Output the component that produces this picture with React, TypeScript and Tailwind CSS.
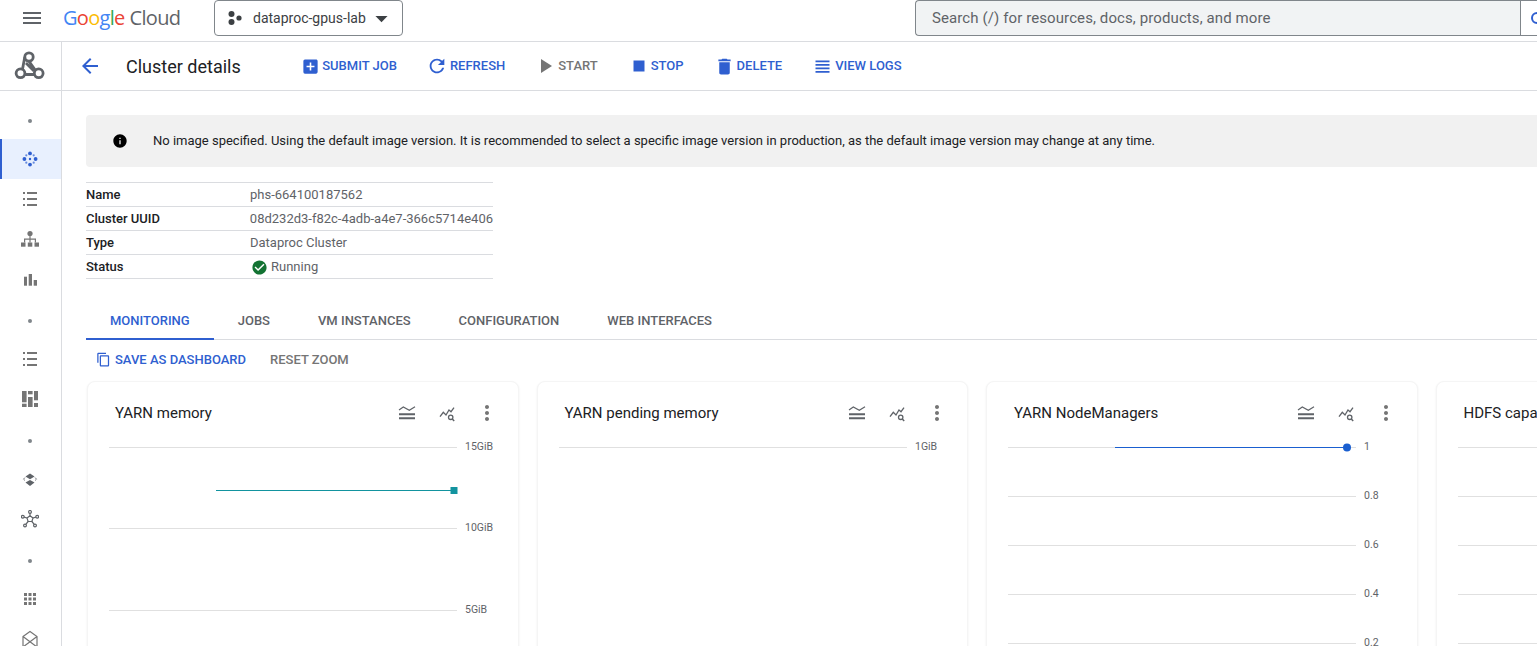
import React from "react";
import {
  MdAddBox,
  MdArrowBack,
  MdArrowDropDown,
  MdCheckCircle,
  MdContentCopy,
  MdDelete,
  MdInfo,
  MdMenu,
  MdMoreVert,
  MdPlayArrow,
  MdRefresh,
  MdStop,
  MdViewHeadline,
} from "react-icons/md";

const GREY = "#757575";
const DARK = "#5f6368";

const Dot = () => (
  <svg width="20" height="20" viewBox="0 0 20 20" className="mt-[3px]">
    <circle cx="10" cy="10" r="2" fill="#80868b" />
  </svg>
);

const ClusterDots = () => (
  <svg width="16" height="16" viewBox="0 0 16 16" fill="#2f5fd0">
    <circle cx="8" cy="2.400" r="1.900" />
    <circle cx="2.400" cy="8" r="1.900" />
    <circle cx="13.600" cy="8" r="1.900" />
    <circle cx="8" cy="13.600" r="1.900" />
    <circle cx="8" cy="8" r="1.200" />
    <circle cx="4.300" cy="4.300" r="1.100" opacity="0.7" />
    <circle cx="11.700" cy="4.300" r="1.100" opacity="0.7" />
    <circle cx="4.300" cy="11.700" r="1.100" opacity="0.7" />
    <circle cx="11.700" cy="11.700" r="1.100" opacity="0.7" />
  </svg>
);

const ListIcon = () => (
  <svg width="16" height="16" viewBox="0 0 16 16" fill={GREY}>
    <rect x="1" y="1" width="2" height="2" />
    <rect x="5" y="1" width="10" height="2" />
    <rect x="1" y="7" width="2" height="2" />
    <rect x="5" y="7" width="10" height="2" />
    <rect x="1" y="13" width="2" height="2" />
    <rect x="5" y="13" width="10" height="2" />
  </svg>
);

const TreeIcon = () => (
  <svg width="18" height="18" viewBox="0 0 18 18" fill={GREY}>
    <circle cx="9" cy="3.500" r="2.600" />
    <path d="M8.400 5h1.200v3.500h5.400v4h-1.200V9.700H9.600v2.800H8.400V9.700H4.200v2.800H3v-4h5.400z" />
    <rect x="0" y="12.500" width="4.500" height="4.200" />
    <rect x="6.800" y="12.500" width="4.500" height="4.200" />
    <rect x="13.500" y="12.500" width="4.500" height="4.200" />
  </svg>
);

const BarsIcon = () => (
  <svg width="16" height="16" viewBox="0 0 16 16" fill={GREY}>
    <rect x="2" y="5.700" width="3" height="9" />
    <rect x="6.700" y="3" width="3.300" height="11.700" />
    <rect x="11.700" y="9" width="3.300" height="5.700" />
  </svg>
);

const BoardIcon = () => (
  <svg width="16" height="16" viewBox="0 0 16 16" fill={GREY}>
    <rect x="0" y="0" width="4.600" height="11.300" />
    <rect x="0" y="12.700" width="4.600" height="3.300" />
    <rect x="6" y="0" width="4.600" height="3.300" />
    <rect x="6" y="6" width="4.600" height="10" />
    <rect x="12" y="0" width="4" height="9.300" />
    <rect x="12" y="12" width="4" height="4" />
  </svg>
);

const OrbitIcon = () => (
  <svg width="16" height="16" viewBox="0 0 16 16" fill={DARK}>
    <path d="M8 2.500 12.500 5.500 8 8.300 3.500 5.500z" />
    <path d="M8 9 12.500 11.500 8 15 3.500 11.500z" />
    <path d="M3 6.500 1.500 8.200 3 9.500M13 6.500l1.500 1.700L13 9.500" fill="none" stroke={DARK} strokeWidth="0.800" />
  </svg>
);

const HubIcon = () => (
  <svg width="18" height="18" viewBox="0 0 18 18" fill="none" stroke={DARK} strokeWidth="1.200">
    <path d="M9 5.800 12 8l-1.100 3.500H7.100L6 8z" />
    <circle cx="9" cy="1.900" r="1.400" />
    <circle cx="1.800" cy="6.700" r="1.400" />
    <circle cx="16.200" cy="6.700" r="1.400" />
    <circle cx="4" cy="15.500" r="1.400" />
    <circle cx="14" cy="15.500" r="1.400" />
    <path d="M9 3.300v2.500M3.100 7.100 6 8M14.900 7.100 12 8M4.800 14.300l2.300-2.800M13.200 14.300l-2.300-2.800" />
  </svg>
);

const GridIcon = () => (
  <svg width="14" height="14" viewBox="0 0 14 14" fill={GREY}>
    {[1, 5.5, 10].map((y) =>
      [1, 5.5, 10].map((x) => <rect key={`${x}-${y}`} x={x} y={y} width="3" height="3" />),
    )}
  </svg>
);

const EnvelopeIcon = () => (
  <svg width="18" height="18" viewBox="0 0 18 18" fill="none" stroke={GREY} strokeWidth="1.200">
    <path d="M2 6.500 9 1.500l7 5V17H2zM2 6.500 16 17M16 6.500 2 17" />
  </svg>
);

const ClusterLogo = () => (
  <svg width="32" height="32" viewBox="0 0 32 32" fill="none" stroke={DARK} strokeWidth="2.800">
    <circle cx="15" cy="7" r="4.200" />
    <circle cx="6.500" cy="23.300" r="4.400" />
    <circle cx="24.700" cy="23.300" r="4.400" />
    <path d="M10.800 7 8.500 19.300M10.500 24.500h10M15 11.200l6 8.700M12 13l8 8" />
  </svg>
);

const ProjectDots = () => (
  <svg width="14" height="14" viewBox="0 0 14 14" fill="#3c4043">
    <circle cx="3.500" cy="3" r="3" />
    <circle cx="11" cy="7" r="2.600" />
    <circle cx="3.500" cy="11" r="3" />
  </svg>
);

const LegendIcon = () => (
  <svg width="18" height="18" viewBox="0 0 18 18" fill="none" stroke={DARK} strokeWidth="1.200">
    <path d="M1 6 5.300 3l6 3.300L17 2.700" />
    <path d="M1 10.300h16M1 14.300h16" strokeWidth="2" />
  </svg>
);

const ExploreIcon = () => (
  <svg width="18" height="18" viewBox="0 0 18 18" fill="none" stroke={DARK} strokeWidth="1.300">
    <path d="M2 12.700 5.300 8.300 8 11l3-5 2 1.700 3-4" />
    <circle cx="12.700" cy="13.300" r="2.200" />
    <path d="m14.300 15 1.900 2" strokeWidth="1.500" />
  </svg>
);

const navItems = [
  <Dot />,
  <ClusterDots />,
  <ListIcon />,
  <TreeIcon />,
  <BarsIcon />,
  <Dot />,
  <ListIcon />,
  <BoardIcon />,
  <Dot />,
  <OrbitIcon />,
  <HubIcon />,
  <Dot />,
  <GridIcon />,
  <EnvelopeIcon />,
];

const Sidebar = () => (
  <aside className="flex w-[62px] shrink-0 flex-col border-r border-[#dadce0]">
    <div className="flex h-[49px] shrink-0 items-center justify-center border-b border-[#dadce0] pr-[2px]">
      <ClusterLogo />
    </div>
    <nav className="flex flex-col pt-[8px]">
      {navItems.map((icon, i) => (
        <div
          key={i}
          className={`flex h-[40px] shrink-0 items-center justify-center ${
            i === 1 ? "border-l-2 border-[#2f5fd0] bg-[#e8f0fe] pr-[3px]" : "pr-px"
          }`}>
          {icon}
        </div>
      ))}
    </nav>
  </aside>
);

const TopBar = () => (
  <header className="flex h-[42px] shrink-0 items-center border-b border-[#dadce0] bg-white pb-[5px]">
    <MdMenu size={24} color={DARK} className="ml-[20px] shrink-0" />
    <div className="ml-[19px] flex w-[118px] shrink-0 items-baseline font-['Open_Sans',sans-serif] text-[20px] leading-none tracking-[-0.7px]">
      <span className="text-[#4285f4]">G</span>
      <span className="text-[#ea4335]">o</span>
      <span className="text-[#fbbc04]">o</span>
      <span className="text-[#4285f4]">g</span>
      <span className="text-[#34a853]">l</span>
      <span className="text-[#ea4335]">e</span>
      <span className="ml-[5px] text-[#5f6368]">Cloud</span>
    </div>
    <button className="ml-[33px] flex h-[36px] w-[189px] shrink-0 items-center rounded border border-[#80868b] pl-[13px] text-[14px] text-[#3c4043]">
      <ProjectDots />
      <span className="ml-[11px]">dataproc-gpus-lab</span>
      <MdArrowDropDown size={29} color="#3c4043" className="ml-px" />
    </button>
    <div className="ml-auto flex h-[36px] w-[622px] shrink-0 items-center rounded-l border border-r-0 border-[#80868b] bg-[#f1f3f4]">
      <span className="flex-1 pl-[16px] text-[15px] tracking-[0.1px] text-[#5f6368]">
        Search (/) for resources, docs, products, and more
      </span>
      <div className="flex h-full w-[17px] items-center overflow-hidden border-l border-[#80868b] bg-white pl-[10px]">
        <span className="block h-[12px] w-[12px] shrink-0 rounded-full border-2 border-[#2f5fd0]" />
      </div>
    </div>
  </header>
);

const ActionButton = ({
  icon,
  label,
  disabled,
  className = "",
}: {
  icon: React.ReactNode;
  label: string;
  disabled?: boolean;
  className?: string;
}) => (
  <button
    className={`flex items-center text-[13px] font-medium ${
      disabled ? "text-[#757575]" : "text-[#2f5fd0]"
    } ${className}`}>
    {icon}
    {label}
  </button>
);

const SubHeader = () => (
  <div className="flex h-[49px] shrink-0 items-center border-b border-[#dadce0] pl-[16px]">
    <MdArrowBack size={24} color="#2f5fd0" />
    <h1 className="ml-[24px] text-[18px] text-[#202124]">Cluster details</h1>
    <ActionButton
      className="ml-[60px]"
      label="SUBMIT JOB"
      icon={<MdAddBox size={19} className="mr-[2.500px]" />}
    />
    <ActionButton
      className="ml-[29px]"
      label="REFRESH"
      icon={<MdRefresh size={22} className="mr-[2px]" />}
    />
    <ActionButton
      disabled
      className="ml-[28px]"
      label="START"
      icon={<MdPlayArrow size={24} className="mr-[1px]" />}
    />
    <ActionButton
      className="ml-[30px]"
      label="STOP"
      icon={<MdStop size={22} className="mr-[1px]" />}
    />
    <ActionButton
      className="ml-[30px]"
      label="DELETE"
      icon={<MdDelete size={21} className="mr-[2px]" />}
    />
    <ActionButton
      className="ml-[29.500px]"
      label="VIEW LOGS"
      icon={<MdViewHeadline size={21} className="mr-[2.500px]" />}
    />
  </div>
);

const details = [
  ["Name", "phs-664100187562"],
  ["Cluster UUID", "08d232d3-f82c-4adb-a4e7-366c5714e406"],
  ["Type", "Dataproc Cluster"],
];

const DetailsTable = () => (
  <div className="mt-[15px] w-[407px] border-t border-[#dadce0] text-[13px]">
    {details.map(([k, v]) => (
      <div key={k} className="flex h-[24px] items-center border-b border-[#dadce0] pt-px">
        <span className="w-[164px] font-medium text-[#202124]">{k}</span>
        <span className="whitespace-nowrap text-[#5f6368]">{v}</span>
      </div>
    ))}
    <div className="flex h-[24px] items-center border-b border-[#dadce0] pt-px">
      <span className="w-[164px] font-medium text-[#202124]">Status</span>
      <MdCheckCircle size={17} color="#137333" className="ml-[1px]" />
      <span className="ml-[3px] text-[#5f6368]">Running</span>
    </div>
  </div>
);

const tabs = ["MONITORING", "JOBS", "VM INSTANCES", "CONFIGURATION", "WEB INTERFACES"];

const Tabs = () => (
  <div className="mt-[26px] flex h-[35px] items-stretch border-b border-[#dadce0]">
    {tabs.map((t, i) => (
      <div
        key={t}
        className={`-mb-px flex items-center border-b-2 px-[24px] pb-[2px] text-[13px] font-medium ${
          i === 0 ? "border-[#2f5fd0] text-[#2f5fd0]" : "border-transparent text-[#5f6368]"
        }`}>
        {t}
      </div>
    ))}
  </div>
);

type ChartProps = {
  title: string;
  ticks: { y: number; label: string }[];
  series?: { x1: number; x2: number; y: number; color: string; marker: "square" | "circle" };
};

const Chart = ({ title, ticks, series }: ChartProps) => (
  <section className="h-[300px] w-[431.500px] shrink-0 rounded-lg border border-[#f5f5f5] bg-white shadow-[0_1px_2px_rgba(60,64,67,0.1)]">
    <div className="flex h-[64px] items-center pb-[2px] pl-[27px] pr-[18.500px]">
      <h2 className="flex-1 whitespace-nowrap text-[15px] text-[#202124]">{title}</h2>
      <LegendIcon />
      <span className="ml-[22px]">
        <ExploreIcon />
      </span>
      <MdMoreVert size={24} color={GREY} className="ml-[19px]" />
    </div>
    <svg width="429" height="234" className="block overflow-visible">
      {ticks.map((t) => (
        <g key={t.label}>
          <line x1="21" x2="369" y1={t.y + 0.5} y2={t.y + 0.5} stroke="#e0e0e0" />
          <text x="377" y={t.y + 3} fontSize="10.500" fill="#5f6368">
            {t.label}
          </text>
        </g>
      ))}
      {series && (
        <line x1={series.x1} x2={series.x2} y1={series.y + 0.5} y2={series.y + 0.5} stroke={series.color} />
      )}
      {series?.marker === "square" && (
        <rect x={series.x2 - 3.5} y={series.y - 3} width="7" height="7" fill={series.color} />
      )}
      {series?.marker === "circle" && <circle cx={series.x2} cy={series.y + 0.5} r="4" fill={series.color} />}
    </svg>
  </section>
);

const nodeTicks = [
  { y: 1, label: "1" },
  { y: 50, label: "0.8" },
  { y: 99, label: "0.6" },
  { y: 148, label: "0.4" },
  { y: 197, label: "0.2" },
];

export default function App() {
  return (
    <div className="flex h-[646px] w-[1537px] flex-col overflow-hidden bg-white font-['Roboto',sans-serif]">
      <TopBar />
      <div className="flex min-h-0 flex-1">
        <Sidebar />
        <main className="flex min-w-0 flex-1 flex-col">
          <SubHeader />
          <div className="pl-[24px]">
            <div className="mt-[24px] flex h-[52px] items-center rounded-l bg-[#f1f1f1] pl-[26px] text-[13px] text-[#202124]">
              <MdInfo size={16} color="#000000" />
              <span className="ml-[25px] whitespace-nowrap">
                No image specified. Using the default image version. It is recommended to select a specific image version in production, as the default image version may change at any time.
              </span>
            </div>
            <DetailsTable />
            <Tabs />
            <div className="flex h-[41px] items-center pb-[2px] pl-[10px] text-[13px] font-medium">
              <MdContentCopy size={15} color="#2f5fd0" />
              <span className="ml-[4px] text-[#2f5fd0]">SAVE AS DASHBOARD</span>
              <span className="ml-[24px] text-[#757575]">RESET ZOOM</span>
            </div>
            <div className="flex gap-[18px] pl-px">
              <Chart
                title="YARN memory"
                ticks={[
                  { y: 1, label: "15GiB" },
                  { y: 82, label: "10GiB" },
                  { y: 164, label: "5GiB" },
                ]}
                series={{ x1: 128, x2: 366, y: 44, color: "#12939f", marker: "square" }}
              />
              <Chart title="YARN pending memory" ticks={[{ y: 1, label: "1GiB" }]} />
              <Chart
                title="YARN NodeManagers"
                ticks={nodeTicks}
                series={{ x1: 128, x2: 360, y: 1, color: "#1a5fd0", marker: "circle" }}
              />
              <Chart title="HDFS capacity" ticks={nodeTicks} />
            </div>
          </div>
        </main>
      </div>
    </div>
  );
}
